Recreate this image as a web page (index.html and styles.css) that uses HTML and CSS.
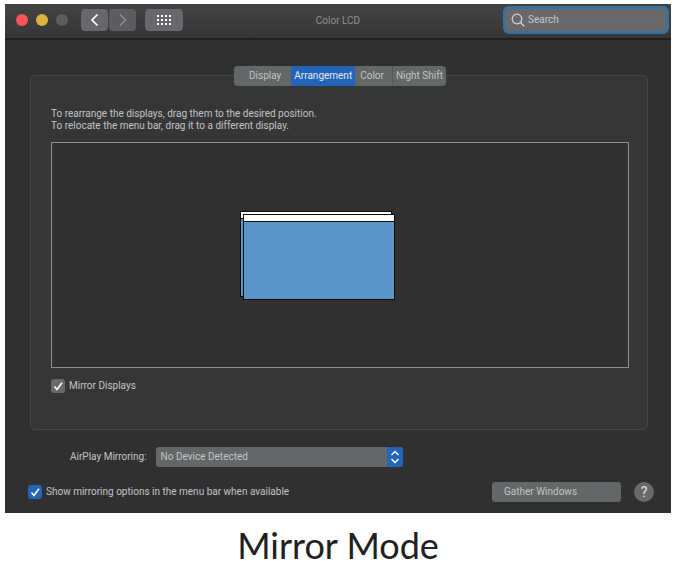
FILE: index.html
```html
<!DOCTYPE html>
<html lang="en">
<head>
<meta charset="utf-8">
<title>Color LCD</title>
<link rel="stylesheet" href="styles.css">
</head>
<body>
<figure class="figure">
  <main class="window">
    <header class="titlebar">
      <div class="lights">
        <span class="light light-close"></span>
        <span class="light light-minimize"></span>
        <span class="light"></span>
      </div>
      <nav class="history">
        <button class="tool" type="button" aria-label="Back"><svg width="27" height="22" viewBox="0 0 27 22"><path d="M16.500 5.500 11 11l5.500 5.500" fill="none" stroke="#fff" stroke-width="1.700"/></svg></button>
        <button class="tool" type="button" aria-label="Forward" disabled><svg width="27" height="22" viewBox="0 0 27 22"><path d="M11 5.500 16.500 11 11 16.500" fill="none" stroke="#8c8d90" stroke-width="1.500"/></svg></button>
      </nav>
      <button class="tool tool-grid" type="button" aria-label="Show All"><svg width="16" height="12" viewBox="0 0 16 12"><path d="M1 2h14M1 6h14M1 10h14" stroke="#fff" stroke-width="2" stroke-dasharray="2 2"/></svg></button>
      <h1 class="title">Color LCD</h1>
      <label class="search">
        <svg width="14" height="14" viewBox="0 0 14 14"><circle cx="6" cy="6" r="4.800" fill="none" stroke="#d4d6d8" stroke-width="1.200"/><path d="m9.500 9.500 3.700 3.700" stroke="#d4d6d8" stroke-width="1.400"/></svg>
        <input type="search" placeholder="Search" aria-label="Search">
      </label>
    </header>

    <section class="panel">
      <div class="tabs" role="tablist">
        <button class="tab tab-display" type="button" role="tab">Display</button>
        <button class="tab tab-active" type="button" role="tab" aria-selected="true">Arrangement</button>
        <button class="tab tab-color" type="button" role="tab">Color</button>
        <button class="tab tab-divided" type="button" role="tab">Night Shift</button>
      </div>
      <p class="hint">To rearrange the displays, drag them to the desired position.<br>To relocate the menu bar, drag it to a different display.</p>
      <div class="canvas">
        <div class="screen screen-back"></div>
        <div class="screen screen-front"></div>
      </div>
      <label class="check">
        <span class="box"><input type="checkbox" checked><svg class="tick" width="14" height="14" viewBox="0 0 14 14"><path d="m3.500 7.500 2.500 3L11 3.800" fill="none" stroke="#fff" stroke-width="1.600"/></svg></span>
        Mirror Displays
      </label>
    </section>

    <div class="airplay">
      <label for="airplay">AirPlay Mirroring:</label>
      <span class="picker">
        <select id="airplay"><option>No Device Detected</option></select>
        <svg class="stepper" width="16" height="20" viewBox="0 0 16 20"><path d="M4.500 8 8 4.500 11.500 8M4.500 12 8 15.500 11.500 12" fill="none" stroke="#fff" stroke-width="1.400"/></svg>
      </span>
    </div>

    <footer class="footer">
      <label class="check">
        <span class="box box-blue"><input type="checkbox" checked><svg class="tick" width="14" height="14" viewBox="0 0 14 14"><path d="m3.500 7.500 2.500 3L11 3.800" fill="none" stroke="#fff" stroke-width="1.600"/></svg></span>
        Show mirroring options in the menu bar when available
      </label>
      <button class="gather" type="button">Gather Windows</button>
      <button class="help" type="button" aria-label="Help">?</button>
    </footer>
  </main>
  <figcaption class="caption">Mirror Mode</figcaption>
</figure>
</body>
</html>
```
FILE: styles.css
```css
* { box-sizing: border-box; }

body {
  margin: 0;
  background: #fff;
  color: #c3c4c5;
  font: 10px/12px Roboto, "Noto Sans", sans-serif;
}

button, input, select {
  margin: 0;
  padding: 0;
  border: 0;
  color: inherit;
  font: inherit;
}

svg { display: block; flex: none; }

.figure { margin: 4px 6px 0 5px; }

.window {
  padding-bottom: 11px;
  background: #303031;
}

.titlebar {
  display: flex;
  align-items: center;
  height: 36px;
  padding: 0 2px 2px 11px;
  background: linear-gradient(#434344, #363637);
  border-bottom: 2px solid #202021;
}

.lights { display: flex; gap: 8px; }

.light {
  width: 12px;
  height: 12px;
  border-radius: 50%;
  background: #5b5c5e;
}
.light-close { background: #f4565b; }
.light-minimize { background: #dcb13d; }

.history { display: flex; gap: 1px; margin-left: 13px; }

.tool {
  display: flex;
  align-items: center;
  justify-content: center;
  width: 27px;
  height: 22px;
  border-radius: 4px;
  background: #67686b;
}
.tool:disabled { background: #5c5d60; }
.tool-grid { width: 38px; margin-left: 9px; }

.title {
  flex: 1;
  margin: 2px 0 0;
  padding-right: 10px;
  color: #919294;
  font-size: 10px;
  font-weight: 400;
  text-align: center;
}

.search {
  display: flex;
  align-items: center;
  gap: 3px;
  width: 166px;
  height: 28px;
  padding: 0 5px;
  border: 3px solid #38719d;
  border-radius: 6px;
  background: #69696c;
}
.search input {
  flex: 1;
  min-width: 0;
  background: transparent;
  outline: 0;
}
.search input::placeholder { color: #c4c5c7; opacity: 1; }

.panel {
  display: flex;
  flex-direction: column;
  margin: 35px 23px 0 25px;
  padding: 0 18px 36px 20px;
  border: 1px solid #454547;
  border-radius: 5px;
  background: #363637;
}

.tabs {
  display: flex;
  align-self: center;
  height: 20px;
  margin-top: -10px;
  overflow: hidden;
  border-radius: 4px;
  background: #646768;
}
.tab { padding: 0 3px; background: transparent; }
.tab-display { padding: 0 10px 0 15px; }
.tab-active { background: #2464b8; color: #e3ebf5; }
.tab-color { padding: 0 8px 0 5px; }
.tab-divided { border-left: 1px solid #55585a; }

.hint { margin: 22px 0 10px; }

.canvas {
  position: relative;
  height: 226px;
  border: 1px solid #8e8e90;
  background: #303031;
}

.screen {
  position: absolute;
  width: 152px;
  height: 86px;
  border: 1px solid #080a0c;
  background: linear-gradient(#fff 6px, #080a0c 6px, #080a0c 7px, #5b95c8 7px);
}
.screen-back { left: 188px; top: 68px; }
.screen-front { left: 191px; top: 71px; }

.check {
  display: flex;
  align-items: center;
  gap: 4px;
}
.panel .check { align-self: flex-start; margin-top: 11px; }

.box { position: relative; height: 14px; }
.box input {
  display: block;
  width: 14px;
  height: 14px;
  appearance: none;
  border-radius: 3px;
  background: #68696b;
}
.box-blue input { background: #2464b8; }
.tick { position: absolute; inset: 0; pointer-events: none; }

.airplay {
  display: flex;
  align-items: center;
  gap: 9px;
  margin: 17px 0 0 65px;
}

.picker { position: relative; width: 247px; }
.picker select {
  display: block;
  width: 100%;
  height: 20px;
  padding: 0 20px 0 5px;
  appearance: none;
  border-radius: 3px;
  background: #646768;
}
.stepper {
  position: absolute;
  top: 0;
  right: 0;
  border-radius: 0 3px 3px 0;
  background: #2464b8;
  pointer-events: none;
}

.footer {
  display: flex;
  align-items: center;
  margin: 15px 17px 0 23px;
}

.gather {
  width: 129px;
  height: 20px;
  margin-left: auto;
  padding-left: 12px;
  border-radius: 3px;
  background: #646768;
  text-align: left;
}

.help {
  width: 20px;
  height: 20px;
  margin-left: 13px;
  border-radius: 50%;
  background: #68696b;
  color: #e4e4e5;
  font-size: 14px;
}

.caption {
  margin-top: 12px;
  color: #202021;
  font: 36px/40px Lato, sans-serif;
  text-align: center;
}
```
